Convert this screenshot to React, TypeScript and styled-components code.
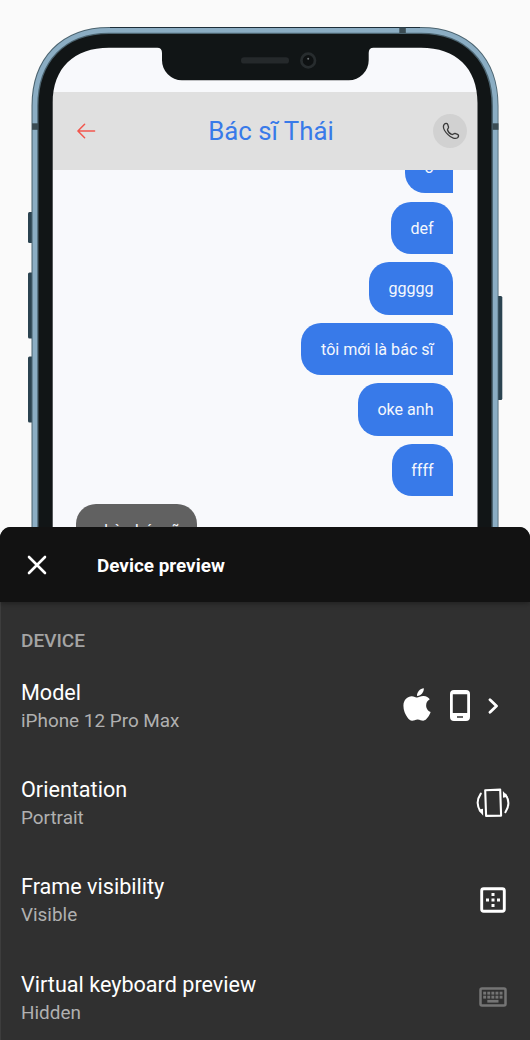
import React from "react";
import styled, { createGlobalStyle } from "styled-components";
import { FaApple } from "react-icons/fa";

const GlobalStyle = createGlobalStyle`
  * { box-sizing: border-box; }
  body { margin: 0; background: #fafafa; font-family: Roboto, "Liberation Sans", sans-serif; }
`;

const Page = styled.div`
  width: 530px;
  height: 1040px;
  display: flex;
  flex-direction: column;
  overflow: hidden;
  background: #fafafa;
`;

const Stage = styled.div`
  position: relative;
  flex: 0 0 527px;
  padding: 47px 52px 0 52px;
  overflow: hidden;
`;

const Screen = styled.div`
  height: 480px;
  padding-top: 44.5px;
  border-radius: 52px 52px 0 0;
  display: flex;
  flex-direction: column;
  overflow: hidden;
  background: #f8f9fc;
`;

const ChatHeader = styled.header`
  flex: 0 0 78.5px;
  display: grid;
  grid-template-columns: 70px 1fr 70px;
  align-items: center;
  background: #e0e0e0;
`;

const BackButton = styled.button`
  display: flex;
  padding: 0 0 0 24px;
  border: 0;
  background: none;
`;

const ChatTitle = styled.h1`
  margin: 0 0 0 12px;
  text-align: center;
  font-size: 25.8px;
  line-height: 30px;
  font-weight: 400;
  color: #387ae9;
`;

const CallButton = styled.button`
  display: flex;
  align-items: center;
  justify-content: center;
  justify-self: end;
  width: 34px;
  height: 34px;
  margin-right: 11px;
  padding: 0 0 0 1px;
  border: 0;
  border-radius: 50%;
  background: #d1d1d1;
`;

const Messages = styled.div`
  flex: 1;
  overflow: hidden;
  padding: 0 24.8px 0 24.3px;
`;

const MessageList = styled.div`
  display: flex;
  flex-direction: column;
  gap: 8.2px;
  margin-top: -29px;
`;

const Bubble = styled.div<{ $mine?: boolean }>`
  align-self: ${(p) => (p.$mine ? "flex-end" : "flex-start")};
  height: 52.4px;
  padding: 0 19.6px;
  line-height: 54.4px;
  font-size: 16.1px;
  white-space: nowrap;
  color: #f4f7fd;
  background: ${(p) => (p.$mine ? "#387ae9" : "#616161")};
  border-radius: ${(p) => (p.$mine ? "20px 20px 0 20px" : "20px 20px 20px 0")};
`;

const FrameArt = styled.svg`
  position: absolute;
  inset: 0;
`;

const Sheet = styled.section`
  flex: 1;
  display: flex;
  flex-direction: column;
  background: #303030;
  border-radius: 11px 11px 0 0;
  overflow: hidden;
`;

const SheetHeader = styled.header`
  flex: 0 0 75px;
  display: flex;
  align-items: center;
  gap: 50px;
  padding: 1px 0 0 27px;
  background: #121212;
  box-shadow: 0 1px 6px rgba(0, 0, 0, 0.4);
  z-index: 1;
`;

const SheetTitle = styled.h2`
  margin: 0;
  font-size: 18.9px;
  font-weight: 700;
  color: #fff;
`;

const SheetBody = styled.div`
  flex: 1;
  padding: 27px 21px 0 20px;
  border-left: 1px solid #3d3d3d;
  border-bottom: 1px solid #2b2729;
`;

const SectionLabel = styled.div`
  height: 24px;
  line-height: 24px;
  font-size: 19px;
  font-weight: 500;
  color: #a4a4a4;
`;

const Row = styled.div`
  display: flex;
  align-items: center;
  justify-content: space-between;
  height: 97.2px;
  padding-top: 8px;
`;

const RowText = styled.div`
  padding-top: 3px;
`;

const RowName = styled.div`
  font-size: 21.6px;
  line-height: 28px;
  color: #fff;
`;

const RowValue = styled.div`
  font-size: 18.9px;
  line-height: 28px;
  color: #b0b0b0;
`;

const RowIcons = styled.div<{ $inset?: number }>`
  display: flex;
  align-items: center;
  margin-right: ${(p) => p.$inset ?? 0}px;
  color: #fff;
`;

const AppleMark = styled(FaApple)`
  width: 36px;
  height: 37px;
  margin: 0 15px 2px 0;
`;

const ChevronSlot = styled.span`
  display: flex;
  margin-left: 18px;
`;

const ArrowLeft = () => (
  <svg width="20" height="16" viewBox="0 0 20 16" fill="none" stroke="#f2564d" strokeWidth="1.5" strokeLinecap="round" strokeLinejoin="round">
    <path d="M18.600 8H2M8.600 1.300 1.900 8l6.700 6.700" />
  </svg>
);

const PhoneIcon = () => (
  <svg width="18" height="18" viewBox="0 0 18 18" fill="none" stroke="#3a3a3a" strokeWidth="1.3" strokeLinejoin="round">
    <path d="M2.2 2.4C3.4 1 5.1 1 5.7 2.4L6.5 5C6.8 6.3 5.3 6.8 5.5 8C6.2 10 8 11.9 10 12.5C11.2 12.7 11.7 11.2 13 11.4L15.5 12.3C17 13 16.8 14.7 15.5 15.7C13.5 17 9.5 16.3 6 12.6C1.8 8.5 .6 4.7 2.2 2.4Z" />
  </svg>
);

const CloseIcon = () => (
  <svg width="20" height="20" viewBox="0 0 20 20" stroke="#fff" strokeWidth="2.6" strokeLinecap="round">
    <path d="M2 2l16 16M18 2L2 18" />
  </svg>
);

const DeviceIcon = () => (
  <svg width="20" height="31" viewBox="0 0 20 31">
    <path fillRule="evenodd" fill="#fff" d="M4 0h12a4 4 0 0 1 4 4v23a4 4 0 0 1-4 4H4a4 4 0 0 1-4-4V4a4 4 0 0 1 4-4ZM2.800 4.300v18.700h14.400V4.300ZM7 26.200v1.600h6v-1.600Z" />
  </svg>
);

const ChevronIcon = () => (
  <svg width="11" height="16" viewBox="0 0 11 16" fill="none" stroke="#fff" strokeWidth="2.8" strokeLinecap="round" strokeLinejoin="round">
    <path d="M2 1.8 8.5 8 2 14.2" />
  </svg>
);

const RotateIcon = () => (
  <svg width="34" height="30" viewBox="0 0 34 30" fill="none" stroke="#fff">
    <path strokeWidth="2.1" strokeLinejoin="round" d="M9.200 2.200 24.200 1.600 25.100 27.600 10.100 27.900Z" />
    <path strokeWidth="2" strokeLinecap="round" d="M4.800 5.600C.8 11.500 .8 18 4.500 23.500" />
    <path strokeWidth="2" strokeLinecap="round" d="M29.400 24.200C33.200 18.500 33.200 12 29.500 6.500" />
    <path fill="#fff" stroke="none" d="M2.200 21.700 7 20.700 7.200 27.800ZM31.800 8.800 27 9.800 26.900 2.900Z" />
  </svg>
);

const BorderIcon = () => (
  <svg width="26" height="26" viewBox="0 0 26 26">
    <rect x="1.7" y="1.7" width="22.6" height="22.6" rx="2" fill="none" stroke="#fff" strokeWidth="2.9" />
    <g fill="#fff">
      <rect x="11.5" y="6" width="3" height="3" />
      <rect x="11.5" y="11.5" width="3" height="3" />
      <rect x="11.5" y="17" width="3" height="3" />
      <rect x="6" y="11.5" width="3" height="3" />
      <rect x="17" y="11.5" width="3" height="3" />
    </g>
  </svg>
);

const KeyboardIcon = () => (
  <svg width="28" height="20" viewBox="0 0 28 20">
    <rect x="1.5" y="1.5" width="25" height="17" rx="1.5" fill="none" stroke="#747474" strokeWidth="2.5" />
    <g fill="#747474">
      {[4.2, 8.3, 12.4, 16.5, 20.6].map((x) => (
        <React.Fragment key={x}>
          <rect x={x} y="4.7" width="2.9" height="2.9" />
          <rect x={x} y="8.7" width="2.9" height="2.9" />
        </React.Fragment>
      ))}
      <rect x="8.3" y="12.9" width="11.2" height="2.7" />
    </g>
  </svg>
);

const PhoneFrame = () => (
  <FrameArt width="530" height="527" viewBox="0 0 530 527">
    <g fill="#2b4350">
      <rect x="28" y="212" width="6" height="31" rx="1.5" />
      <rect x="28" y="272.5" width="6" height="66" rx="1.5" />
      <rect x="28" y="356.5" width="6" height="66" rx="1.5" />
      <rect x="496" y="296" width="6.3" height="104" rx="1.5" />
    </g>
    <path
      fillRule="evenodd"
      fill="#111516"
      d="M34 540V106C34 58 62 29.5 109 29.5H421C468 29.5 496 58 496 106V540H477.5V103C477.5 68 456 47.8 421 47.8H373.5Q368.7 47.8 368.7 53V60A20 20 0 0 1 348.7 80.2H182A20 20 0 0 1 162 60V53Q162 47.8 157.2 47.8H109C74 47.8 52.7 68 52.7 103V540Z"
    />
    <path fill="none" stroke="#4c6470" strokeWidth="7" d="M35 540V106C35 60 63 30.5 109 30.5H421C467 30.5 495 60 495 106V540" />
    <path fill="none" stroke="#8badc3" strokeWidth="4.7" d="M34.9 540V106C34.9 60 63 30.3 109 30.3H421C467 30.3 495.3 60 495.3 106V540" />
    <path fill="none" stroke="#1d2e38" strokeWidth="1" d="M110 27.5H420" />
    <g fill="#3b4c54">
      <rect x="32" y="123.300" width="6" height="6.5" />
      <rect x="492.5" y="123.300" width="6" height="6.5" />
      <rect x="399.3" y="27.5" width="6.5" height="5.5" />
    </g>
    <rect x="241" y="57.2" width="48" height="6.4" rx="3.2" fill="#25292b" />
    <circle cx="308.2" cy="60.5" r="6.8" fill="#0e1112" stroke="#272c2e" strokeWidth="2.7" />
    <circle cx="308.2" cy="58.8" r="1" fill="#707678" />
  </FrameArt>
);

const sent = ["o", "def", "ggggg", "tôi mới là bác sĩ", "oke anh", "ffff"];

const settings = [
  {
    name: "Model",
    value: "iPhone 12 Pro Max",
    inset: 10,
    icons: (
      <>
        <AppleMark />
        <DeviceIcon />
        <ChevronSlot>
          <ChevronIcon />
        </ChevronSlot>
      </>
    ),
  },
  { name: "Orientation", value: "Portrait", inset: -1, icons: <RotateIcon /> },
  { name: "Frame visibility", value: "Visible", inset: 3.5, icons: <BorderIcon /> },
  { name: "Virtual keyboard preview", value: "Hidden", inset: 2.5, icons: <KeyboardIcon /> },
];

export default function App() {
  return (
    <Page>
      <GlobalStyle />
      <Stage>
        <Screen>
          <ChatHeader>
            <BackButton aria-label="Back">
              <ArrowLeft />
            </BackButton>
            <ChatTitle>Bác sĩ Thái</ChatTitle>
            <CallButton aria-label="Call">
              <PhoneIcon />
            </CallButton>
          </ChatHeader>
          <Messages>
            <MessageList>
              {sent.map((text) => (
                <Bubble key={text} $mine>
                  {text}
                </Bubble>
              ))}
              <Bubble>chào bác sĩ</Bubble>
            </MessageList>
          </Messages>
        </Screen>
        <PhoneFrame />
      </Stage>
      <Sheet>
        <SheetHeader>
          <CloseIcon />
          <SheetTitle>Device preview</SheetTitle>
        </SheetHeader>
        <SheetBody>
          <SectionLabel>DEVICE</SectionLabel>
          {settings.map((s) => (
            <Row key={s.name}>
              <RowText>
                <RowName>{s.name}</RowName>
                <RowValue>{s.value}</RowValue>
              </RowText>
              <RowIcons $inset={s.inset}>{s.icons}</RowIcons>
            </Row>
          ))}
        </SheetBody>
      </Sheet>
    </Page>
  );
}
